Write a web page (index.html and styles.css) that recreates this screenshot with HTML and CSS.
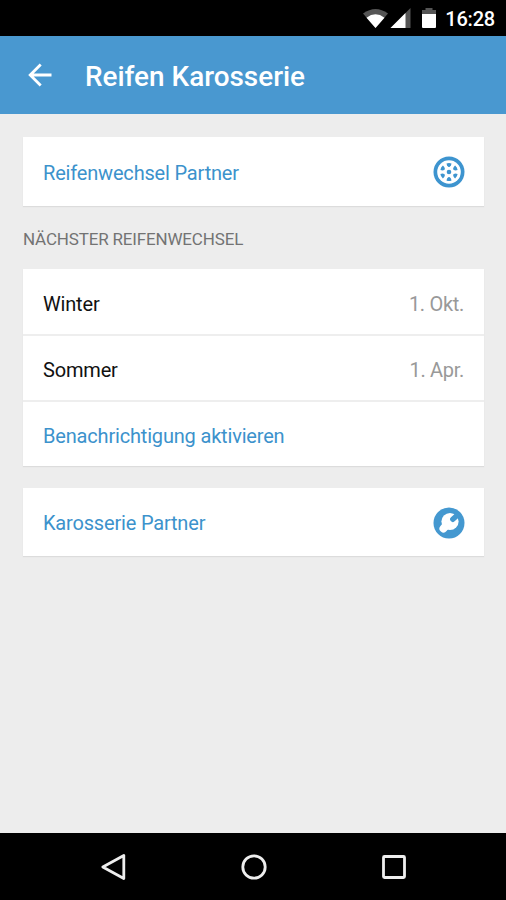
FILE: index.html
```html
<!DOCTYPE html>
<html lang="de">
<head>
<meta charset="utf-8">
<title>Reifen Karosserie</title>
<link rel="stylesheet" href="styles.css">
</head>
<body>
<div class="screen">
  <div class="status">
    <svg class="status-icons" viewBox="0 0 76 24" width="76" height="24" aria-hidden="true">
      <path fill="#555" d="M0 6.500Q12.500-2.500 25 6.500L12.500 21Z"/>
      <path fill="#fff" d="M3.500 10.700Q12.500 4 21.500 10.700L12.500 21Z"/>
      <path fill="#555" d="M47.500 1V21H27.500Z"/>
      <path fill="#fff" d="M42.500 6V21H27.500Z"/>
      <path fill="#555" d="M59 7V3H62.500V1H69.500V3H73V7Z"/>
      <path fill="#fff" d="M59 7H73V20Q73 21 72 21H60Q59 21 59 20Z"/>
    </svg>
    <span class="clock">16:28</span>
  </div>
  <header class="appbar">
    <svg class="back" viewBox="0 0 24 24" width="24" height="24" fill="none" stroke="#fff" stroke-width="2.800"><path d="M23.500 12H2.500M12.700 1.500L2.200 12L12.700 22.500"/></svg>
    <h1 class="title">Reifen Karosserie</h1>
  </header>
  <main class="content">
    <section class="card">
      <div class="row row-first link"><span>Reifenwechsel Partner</span>
        <svg class="badge" viewBox="0 0 32 32" width="32" height="32">
          <circle cx="16" cy="16" r="15.500" fill="#3d94cf"/>
          <circle cx="16" cy="16" r="11.800" fill="#fff"/>
          <g fill="#3d94cf">
            <circle cx="16" cy="16" r="2.300"/>
            <path id="hole" d="M13.500 7.500Q16 6.400 18.500 7.500Q18.200 9.700 16.800 10.800Q16 11.300 15.200 10.800Q13.800 9.700 13.500 7.500Z"/>
            <use href="#hole" transform="rotate(60 16 16)"/>
            <use href="#hole" transform="rotate(120 16 16)"/>
            <use href="#hole" transform="rotate(180 16 16)"/>
            <use href="#hole" transform="rotate(240 16 16)"/>
            <use href="#hole" transform="rotate(300 16 16)"/>
          </g>
        </svg>
      </div>
    </section>
    <h2 class="label"><span>NÄCHSTER REIFENWECHSEL</span></h2>
    <section class="card list">
      <div class="row"><span>Winter</span><span class="date">1. Okt.</span></div>
      <div class="row"><span>Sommer</span><span class="date">1. Apr.</span></div>
      <div class="row link"><span>Benachrichtigung aktivieren</span></div>
    </section>
    <section class="card last">
      <div class="row row-last link"><span>Karosserie Partner</span>
        <svg class="badge" viewBox="0 0 32 32" width="32" height="32">
          <circle cx="16" cy="16" r="15.500" fill="#4498d0"/>
          <circle cx="17" cy="14.500" r="8.600" fill="#fff"/>
          <path d="M13.500 18L10.500 21.500" stroke="#fff" stroke-width="8" stroke-linecap="round"/>
          <path d="M19.800 12.300L24 8.500" stroke="#4498d0" stroke-width="5.400" stroke-linecap="round"/>
        </svg>
      </div>
    </section>
  </main>
  <nav class="navbar">
    <svg viewBox="0 0 28 28" width="28" height="28"><path d="M2.800 14L23.800 2.500V25.500Z"/></svg>
    <svg viewBox="0 0 28 28" width="28" height="28"><circle cx="14" cy="14" r="11.200"/></svg>
    <svg viewBox="0 0 28 28" width="28" height="28"><rect x="3.500" y="3.500" width="21" height="21" rx="1"/></svg>
  </nav>
</div>
</body>
</html>
```

FILE: styles.css
```css
* { box-sizing: border-box; }
body { margin: 0; background: #ededed; font-family: Roboto, "Liberation Sans", sans-serif; }
.screen { width: 506px; height: 900px; display: flex; flex-direction: column; background: #ededed; }
.status { height: 36px; flex: none; background: #000; color: #fff; display: flex; align-items: center; justify-content: flex-end; gap: 6px; padding-right: 11px; }
.status-icons { margin-top: 1px; }
.clock { font-size: 20px; font-weight: 500; line-height: 24px; margin-top: 2px; letter-spacing: -0.2px; }
.appbar { height: 78px; flex: none; background: #4998d0; display: flex; align-items: center; padding: 0 0 0 28px; }
.title { margin: 3px 0 0 33px; color: #fff; font-size: 27.900px; font-weight: 500; line-height: 32px; white-space: nowrap; }
.content { flex: 1; padding: 23px 22px 0 23px; }
.card { background: #fff; box-shadow: 0 1px 1px #dcdcdc; }
.row { height: 65px; display: flex; align-items: center; justify-content: space-between; padding: 4px 20px 0; font-size: 20px; line-height: 24px; letter-spacing: -0.18px; color: #111; }
.row + .row { height: 66px; border-top: 2px solid #eee; }
.row-first { height: 69px; padding-top: 2px; }
.row-last { height: 68px; padding-top: 2px; }
.link { color: #3c92cc; }
.date { color: #999; letter-spacing: -0.3px; }
.badge { margin: -1px -1px 0 0; }
.label { margin: 0; height: 63px; padding-top: 3px; display: flex; align-items: center; font-size: 17px; font-weight: 400; letter-spacing: -0.17px; color: #737373; }
.last { margin-top: 22px; }
.navbar { height: 67px; flex: none; background: #000; display: flex; justify-content: space-between; align-items: center; padding: 0 98px 0 100px; }
.navbar svg { fill: none; stroke: #eee; stroke-width: 2.800; stroke-linejoin: round; }
```
